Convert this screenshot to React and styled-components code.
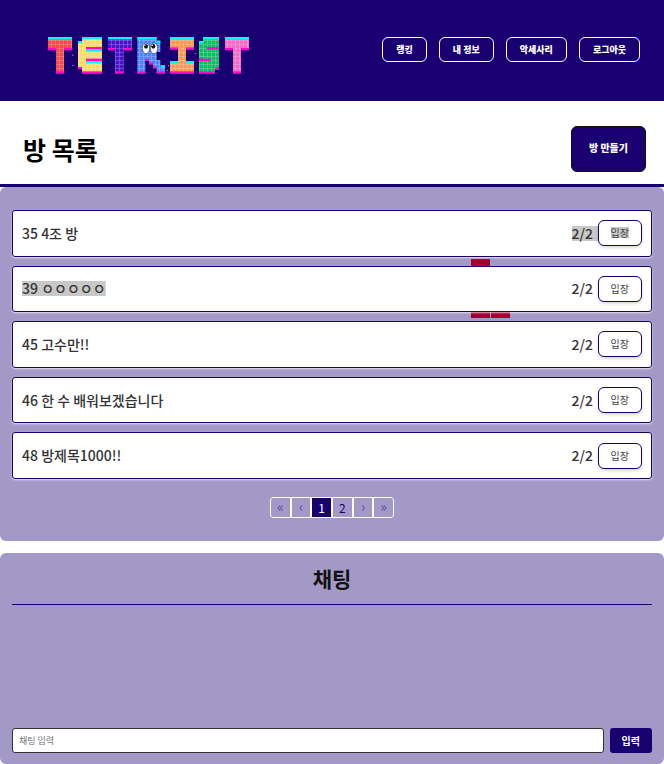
import React from 'react';
import styled, { createGlobalStyle, css } from 'styled-components';

const navy = '#180070';
const lilac = '#a299c6';

const GlobalStyle = createGlobalStyle`
  *, *::before, *::after { box-sizing: border-box; }
  body { margin: 0; background: #fff; overflow-x: hidden; }
  body, button, input { font-family: "Noto Sans CJK KR", sans-serif; }
  button { cursor: pointer; }
`;

const Page = styled.div`
  display: flex;
  flex-direction: column;
  min-height: 100vh;
`;

const Header = styled.header`
  display: flex;
  flex: none;
  align-items: center;
  justify-content: space-between;
  padding: 37px 24px 27px 48px;
  background: ${navy};
`;

const LogoLink = styled.a`
  display: block;
  height: 37px;
`;

const Nav = styled.nav`
  display: flex;
  gap: 12px;
  margin-bottom: 12px;
`;

const NavButton = styled.button`
  height: 25px;
  padding: 0 13px;
  border: 1px solid #fff;
  border-radius: 6px;
  background: ${navy};
  color: #fff;
  font-size: 9px;
  font-weight: 900;
  line-height: 20px;
`;

const TitleBar = styled.section`
  display: flex;
  flex: none;
  align-items: center;
  justify-content: space-between;
  padding: 25px 18px 12px 23px;
  border-bottom: 3px solid ${navy};
`;

const Title = styled.h1`
  margin: 0;
  color: #000;
  font-size: 25px;
  font-weight: 700;
  line-height: 46px;
`;

const CreateButton = styled.button`
  height: 46px;
  padding: 0 17px 4px;
  border: 1px solid #111;
  border-radius: 6px;
  background: ${navy};
  color: #fff;
  font-size: 10px;
  font-weight: 900;
`;

const RoomPanel = styled.section`
  flex: none;
  padding: 23px 12px;
  border-radius: 6px;
  background: ${lilac};
`;

const RoomArea = styled.div`
  position: relative;
  isolation: isolate;
`;

const FallingPiece = styled.svg`
  position: absolute;
  top: 49px;
  right: 142px;
  z-index: -1;
`;

const RoomList = styled.ul`
  display: grid;
  grid-auto-rows: 1fr;
  gap: 9px;
  min-height: 269px;
  margin: 0;
  padding: 0;
  list-style: none;
`;

const RoomRow = styled.li`
  display: flex;
  align-items: center;
  padding: 0 9px;
  border: 1px solid ${navy};
  border-radius: 3px;
  background: #fff;
  box-shadow: 0 1px 2px rgba(255, 255, 255, 0.7);
  color: #333;
  font-size: 14px;
  font-weight: 500;
  line-height: 15px;
`;

const Highlight = styled.span`
  ${({ $on }) => $on && css`
    background: linear-gradient(#c8c8c8, #c8c8c8) center / 100% 15px no-repeat;
  `}
`;

const RoomName = styled.span`
  flex: 1;
`;

const RoomCount = styled(Highlight)`
  min-width: 26px;
`;

const EnterButton = styled.button`
  height: 26px;
  padding: 0 12px;
  border: 1px solid ${navy};
  border-radius: 6px;
  background: #fff;
  box-shadow: 0 2px 3px rgba(0, 0, 0, 0.15);
  color: #444;
  font-size: 10px;
  line-height: 20px;

  ${Highlight} { background-size: 100% 11px; }
`;

const Pagination = styled.nav`
  display: grid;
  grid-template-columns: repeat(6, 1fr);
  width: 124px;
  margin: 18px auto 0;
  border-radius: 3px;
  overflow: hidden;
`;

const PageButton = styled.button`
  height: 21px;
  padding: 0 0 ${({ $arrow }) => ($arrow ? 3 : 0)}px;
  border: 1px solid #fff;
  background: ${({ $current }) => ($current ? navy : lilac)};
  color: ${({ $current, $arrow }) => ($current ? '#fff' : $arrow ? '#5a45a0' : navy)};
  font-size: ${({ $arrow }) => ($arrow ? 14 : 12)}px;
  line-height: 16px;

  &:first-child { border-radius: 3px 0 0 3px; }
  &:last-child { border-radius: 0 3px 3px 0; }
`;

const ChatPanel = styled.section`
  display: flex;
  flex: 1;
  flex-direction: column;
  margin-top: 12px;
  padding: 0 12px 11px;
  border-radius: 6px;
  background: ${lilac};
`;

const ChatTitle = styled.h2`
  margin: 0;
  border-bottom: 1px solid ${navy};
  color: #111;
  font-size: 21px;
  font-weight: 700;
  line-height: 51px;
  text-align: center;
`;

const Messages = styled.div`
  flex: 1;
  overflow-y: auto;
`;

const ChatForm = styled.form`
  display: flex;
  gap: 6px;
`;

const ChatInput = styled.input`
  flex: 1;
  min-width: 0;
  height: 25px;
  padding: 0 6px;
  border: 1px solid #333;
  border-radius: 3px;
  background: #fff;
  font-size: 9px;

  &::placeholder { color: #757575; }
`;

const SendButton = styled.button`
  height: 25px;
  padding: 0 12px;
  border: 0;
  border-radius: 3px;
  background: ${navy};
  color: #fff;
  font-size: 10px;
  font-weight: 700;
  line-height: 20px;
`;

const letters = [
  { fill: '#f84848', d: 'M24 27H96V66H72V136H48V66H24Z' },
  { fill: '#fbdc60', d: 'M126 27H186V136H126V122H114V39H126Z' },
  { fill: '#4a10cc', d: 'M204 27H276V66H251V136H225V66H204Z' },
  { fill: '#4a86fa', d: 'M292 27H350V38H361V72H350V96H361V112H375V136H350V120H339V108H327V96H316V136H292Z' },
  { fill: '#f99850', d: 'M390 27H462V64H438V99H462V136H390V99H414V64H390Z' },
  { fill: '#0cc060', d: 'M489 27H537V125H525V136H477V99H489V92H477V39H489Z' },
  { fill: '#f868c4', d: 'M555 27H627V66H603V136H579V66H555Z' },
];

const cyanBars = [
  [24, 27, 72], [126, 27, 60], [114, 39, 12], [138, 64, 48], [138, 99, 48],
  [204, 27, 72], [292, 27, 58], [350, 38, 11], [363, 112, 12],
  [390, 27, 72], [390, 99, 24], [438, 99, 24],
  [489, 27, 48], [477, 39, 12], [555, 27, 72],
];

const magentaBars = [
  [24, 60, 24], [72, 60, 24], [48, 130, 24], [114, 117, 12], [138, 57, 48], [138, 92, 48], [126, 130, 60],
  [204, 60, 21], [251, 60, 25], [225, 130, 26],
  [292, 130, 24], [316, 92, 11], [327, 103, 12], [339, 115, 11], [350, 130, 25],
  [390, 58, 24], [438, 58, 24], [390, 130, 72],
  [501, 57, 36], [477, 92, 36], [477, 130, 48], [525, 119, 12],
  [555, 60, 24], [603, 60, 24], [579, 130, 24],
];

function Logo() {
  return (
    <svg width="202" height="37" viewBox="24 27 606 111" role="img" aria-label="TETRIST">
      <defs>
        <pattern id="blocks" x="24" y="27" width="12" height="12" patternUnits="userSpaceOnUse">
          <path d="M11 0V12M0 11H12" stroke="#dff4ff" strokeWidth="2" opacity=".42" />
        </pattern>
      </defs>
      {letters.map(({ fill, d }) => <path key={d} d={d} fill={fill} />)}
      {letters.map(({ d }) => <path key={d} d={d} fill="url(#blocks)" />)}
      {cyanBars.map(([x, y, w]) => <rect key={`${x}-${y}`} x={x} y={y} width={w} height="7" fill="#08f4ff" />)}
      {magentaBars.map(([x, y, w]) => <rect key={`${x}-${y}`} x={x} y={y} width={w} height="7" fill="#ff08d4" />)}
      <g fill="#fff" stroke="#38405c" strokeWidth="2">
        <ellipse cx="318" cy="61" rx="11" ry="16" />
        <ellipse cx="342" cy="61" rx="11" ry="16" />
      </g>
      <g fill="#15151d">
        <ellipse cx="318" cy="55" rx="6" ry="7" />
        <ellipse cx="340" cy="55" rx="6" ry="7" />
      </g>
      <g fill="#fff">
        <circle cx="315" cy="52" r="2" />
        <circle cx="337" cy="52" r="2" />
      </g>
      <g fill="#a9b8ee">
        <rect x="384" y="112" width="3" height="3" />
        <rect x="380" y="126" width="3" height="3" />
        <rect x="464" y="75" width="3" height="3" />
        <rect x="97" y="80" width="3" height="3" />
        <rect x="97" y="111" width="3" height="3" />
      </g>
    </svg>
  );
}

const menu = ['랭킹', '내 정보', '악세사리', '로그아웃'];

const rooms = [
  { id: 35, name: '4조 방', entrySelected: true },
  { id: 39, name: 'ㅇㅇㅇㅇㅇ', nameSelected: true },
  { id: 45, name: '고수만!!' },
  { id: 46, name: '한 수 배워보겠습니다' },
  { id: 48, name: '방제목1000!!' },
];

const pages = [
  { text: '«', label: '처음', arrow: true },
  { text: '‹', label: '이전', arrow: true },
  { text: '1', label: '1', current: true },
  { text: '2', label: '2' },
  { text: '›', label: '다음', arrow: true },
  { text: '»', label: '마지막', arrow: true },
];

export default function App() {
  return (
    <Page>
      <GlobalStyle />
      <Header>
        <LogoLink href="#"><Logo /></LogoLink>
        <Nav>
          {menu.map((item) => <NavButton key={item} type="button">{item}</NavButton>)}
        </Nav>
      </Header>

      <TitleBar>
        <Title>방 목록</Title>
        <CreateButton type="button">방 만들기</CreateButton>
      </TitleBar>

      <RoomPanel>
        <RoomArea>
          <FallingPiece width="39" height="59" viewBox="0 0 39 59" fill="#a00030" aria-hidden="true">
            <path d="M0 0H19V19H0ZM0 20H19V39H0ZM0 40H19V59H0ZM20 40H39V59H20Z" />
          </FallingPiece>
          <RoomList>
            {rooms.map(({ id, name, nameSelected, entrySelected }) => (
              <RoomRow key={id}>
                <RoomName><Highlight $on={nameSelected}>{id} {name}</Highlight></RoomName>
                <RoomCount $on={entrySelected}>2/2</RoomCount>
                <EnterButton type="button"><Highlight $on={entrySelected}>입장</Highlight></EnterButton>
              </RoomRow>
            ))}
          </RoomList>
        </RoomArea>
        <Pagination aria-label="페이지">
          {pages.map(({ text, label, arrow, current }) => (
            <PageButton
              key={label}
              type="button"
              aria-label={label}
              aria-current={current ? 'page' : undefined}
              $arrow={arrow}
              $current={current}
            >
              {text}
            </PageButton>
          ))}
        </Pagination>
      </RoomPanel>

      <ChatPanel>
        <ChatTitle>채팅</ChatTitle>
        <Messages />
        <ChatForm onSubmit={(event) => event.preventDefault()}>
          <ChatInput type="text" placeholder="채팅 입력" aria-label="채팅 입력" />
          <SendButton type="submit">입력</SendButton>
        </ChatForm>
      </ChatPanel>
    </Page>
  );
}
